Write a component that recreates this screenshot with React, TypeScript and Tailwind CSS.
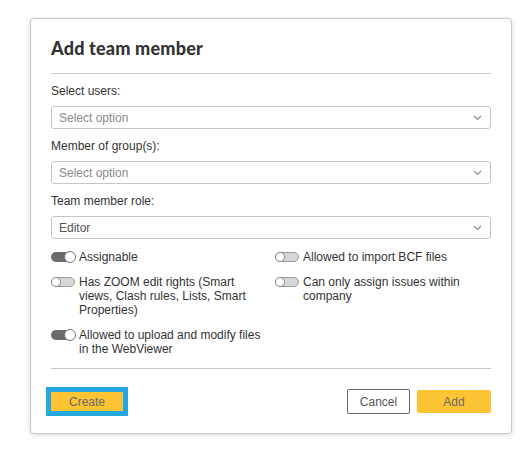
import { useState } from 'react';

function Chevron() {
  return (
    <svg width="9" height="6" viewBox="0 0 9 6" className="shrink-0">
      <path d="M1 1l3.5 3.5L8 1" fill="none" stroke="#8a8a8a" strokeWidth="1.1" />
    </svg>
  );
}

function SelectBox({ value, placeholder }: { value?: string; placeholder?: string }) {
  return (
    <div className="flex h-[23px] items-center justify-between rounded-[3px] border border-[#c6c6c6] bg-white pl-[7px] pr-[8px]">
      <span className={value ? 'text-[12px] leading-[14px] text-[#555]' : 'text-[12px] leading-[14px] text-[#8a8a8a]'}>
        {value || placeholder}
      </span>
      <Chevron />
    </div>
  );
}

function Toggle({ on, label }: { on: boolean; label: string }) {
  const [checked, setChecked] = useState(on);
  return (
    <label className="flex cursor-pointer items-start gap-[4px] text-[12px] leading-[14px] text-[#333]">
      <button
        type="button"
        onClick={() => setChecked(!checked)}
        className={
          checked
            ? 'relative mt-[2px] h-[10px] w-[24px] shrink-0 rounded-full bg-[#6b6b6b]'
            : 'relative mt-[2px] h-[10px] w-[24px] shrink-0 rounded-full border border-[#9a9a9a] bg-[#d6d6d6]'
        }
      >
        <span
          className={
            checked
              ? 'absolute right-[-1px] top-[-1px] h-[12px] w-[12px] rounded-full border border-[#777] bg-white'
              : 'absolute left-[-1px] top-[-1px] h-[10px] w-[10px] rounded-full border border-[#888] bg-white'
          }
        />
      </button>
      <span>{label}</span>
    </label>
  );
}

export default function App() {
  return (
    <div className="min-h-[456px] bg-white pl-[30px] pt-[18px]" style={{ fontFamily: '"Liberation Sans", Arial, sans-serif' }}>
      <div className="w-[482px] rounded-[4px] border border-[#c8c8c8] bg-white px-[20px] pb-[19px] pt-[17px] shadow-[0_1px_5px_rgba(0,0,0,0.15)]">
        <h2 className="text-[18px] font-black leading-[24px] tracking-[0.2px] text-[#333]" style={{ fontFamily: 'Lato, sans-serif' }}>
          Add team member
        </h2>
        <div className="mt-[13px] h-px bg-[#c8c8c8]" />

        <div className="mb-[7px] mt-[9px] text-[12px] leading-[16px] text-[#333]">Select users:</div>
        <SelectBox placeholder="Select option" />

        <div className="mb-[7px] mt-[9px] text-[12px] leading-[16px] text-[#333]">Member of group(s):</div>
        <SelectBox placeholder="Select option" />

        <div className="mb-[7px] mt-[9px] text-[12px] leading-[16px] text-[#333]">Team member role:</div>
        <SelectBox value="Editor" />

        <div className="mt-[11px] grid grid-cols-[220px_220px] gap-x-[4px] gap-y-[11px]">
          <Toggle on label="Assignable" />
          <Toggle on={false} label="Allowed to import BCF files" />
          <Toggle on={false} label="Has ZOOM edit rights (Smart views, Clash rules, Lists, Smart Properties)" />
          <Toggle on={false} label="Can only assign issues within company" />
          <Toggle on label="Allowed to upload and modify files in the WebViewer" />
        </div>

        <div className="mt-[12px] h-px bg-[#c8c8c8]" />

        <div className="mt-[20px] flex items-center justify-between">
          <button
            type="button"
            className="h-[19px] w-[72px] bg-[#fcc332] text-[12px] text-[#6b6b6b] outline outline-[5px] outline-[#24a6df]"
          >
            Create
          </button>
          <div className="flex items-center gap-[7px]">
            <button type="button" className="h-[25px] w-[63px] rounded-[2px] border border-[#666] bg-white text-[12px] text-[#555]">
              Cancel
            </button>
            <button type="button" className="h-[23px] w-[74px] rounded-[2px] bg-[#fcc332] text-[12px] text-[#6b6b6b]">
              Add
            </button>
          </div>
        </div>
      </div>
    </div>
  );
}
